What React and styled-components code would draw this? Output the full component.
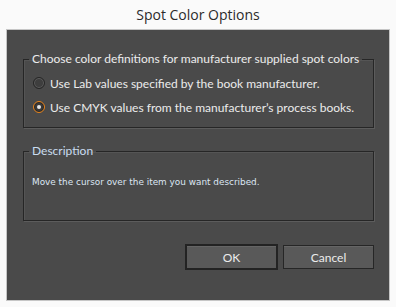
import React from 'react';
import styled, { createGlobalStyle } from 'styled-components';

const GlobalStyle = createGlobalStyle`
  body {
    margin: 0;
    background: #fafafa;
    font-family: Lato, "Open Sans", sans-serif;
  }
`;

const Window = styled.div`
  width: 396px;
  height: 307px;
  display: flex;
  flex-direction: column;
`;

const Title = styled.div`
  height: 29px;
  line-height: 30px;
  text-align: center;
  font-family: "Open Sans", sans-serif;
  font-size: 14px;
  color: #2b2b2b;
`;

const Panel = styled.div`
  margin: 0 6px;
  height: 272px;
  box-sizing: border-box;
  background: #4a4a4a;
  border: 1px solid #c6c6c6;
  padding: 21px 15px 0 16px;
  display: flex;
  flex-direction: column;
`;

const Group = styled.fieldset`
  margin: 0 0 ${p => p.$gap || 0}px;
  padding: ${p => p.$pad};
  border: 1px solid #262626;
  box-shadow: 1px 1px 0 #5c5c5c, inset 1px 1px 0 #555555;
  min-height: ${p => p.$minHeight || 0}px;
  box-sizing: border-box;
`;

const Legend = styled.legend`
  padding: 0 3px;
  margin-left: ${p => p.$shift}px;
  line-height: 16px;
  font-size: 12px;
  white-space: nowrap;
  color: ${p => p.$color || '#ececec'};
`;

const Options = styled.div`
  display: flex;
  flex-direction: column;
  gap: 4px;
`;

const Option = styled.label`
  height: 20px;
  display: flex;
  align-items: center;
  gap: 5px;
  font-size: 12px;
  white-space: nowrap;
  color: #ececec;
`;

const Radio = styled.span`
  width: 12px;
  height: 12px;
  box-sizing: border-box;
  border-radius: 50%;
  border: 1px solid ${p => (p.$checked ? '#e8841c' : '#262626')};
  background: ${p => (p.$checked ? '#3a3a3a' : '#3e3e3e')};
  box-shadow: ${p => (p.$checked ? 'inset 0 0 0 1px #262626' : 'inset 0 0 0 1px #5e5e5e')};
  display: flex;
  align-items: center;
  justify-content: center;
  flex: none;

  &::after {
    content: '';
    width: 4px;
    height: 4px;
    border-radius: 50%;
    background: #e6e6e6;
    display: ${p => (p.$checked ? 'block' : 'none')};
  }
`;

const DescText = styled.div`
  font-family: "DejaVu Sans", sans-serif;
  font-size: 8.9px;
  line-height: 14px;
  color: #dce6f2;
`;

const Buttons = styled.div`
  display: flex;
  justify-content: flex-end;
  align-items: center;
  gap: 5px;
  margin-top: 23px;
`;

const Button = styled.button`
  width: ${p => (p.$primary ? 93 : 91)}px;
  height: ${p => (p.$primary ? 26 : 24)}px;
  box-sizing: border-box;
  background: #595959;
  border: ${p => (p.$primary ? '2px solid #232323' : '1px solid #262626')};
  box-shadow: inset 0 1px 0 #656565;
  color: #ececec;
  font-family: Lato, sans-serif;
  font-size: 12px;
  padding: 0;
`;

export default function App() {
  return (
    <Window>
      <GlobalStyle />
      <Title>Spot Color Options</Title>
      <Panel>
        <Group $pad="6px 0 10px 9px" $gap={15}>
          <Legend $shift={-4}>Choose color definitions for manufacturer supplied spot colors</Legend>
          <Options>
            <Option>
              <Radio />
              Use Lab values specified by the book manufacturer.
            </Option>
            <Option>
              <Radio $checked />
              Use CMYK values from the manufacturer’s process books.
            </Option>
          </Options>
        </Group>
        <Group $pad="16px 0 0 8px" $minHeight={78}>
          <Legend $shift={-3} $color="#c9dcf0">Description</Legend>
          <DescText>Move the cursor over the item you want described.</DescText>
        </Group>
        <Buttons>
          <Button $primary>OK</Button>
          <Button>Cancel</Button>
        </Buttons>
      </Panel>
    </Window>
  );
}
